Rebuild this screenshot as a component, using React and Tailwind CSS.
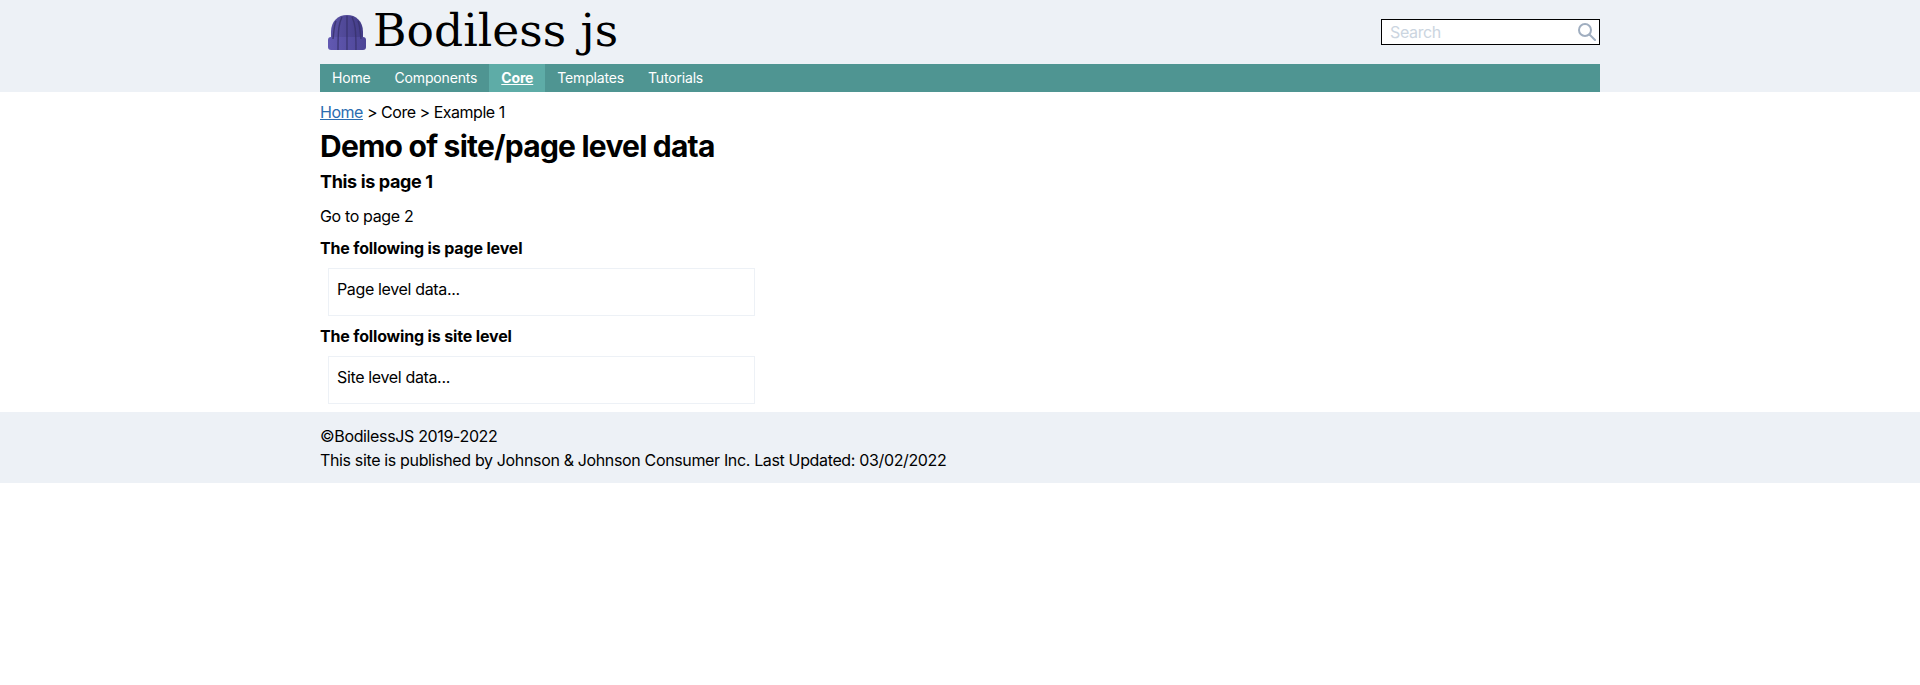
import React from 'react';

function Logo() {
  return (
    <svg viewBox="0 0 38 35" className="w-[38px] h-[35px]" aria-hidden="true">
      <defs>
        <linearGradient id="hatTop" x1="0" x2="1" y1="0" y2="0">
          <stop offset="0" stopColor="#5a52a4" />
          <stop offset="1" stopColor="#433c88" />
        </linearGradient>
        <linearGradient id="hatBrim" x1="0" x2="1" y1="0" y2="0">
          <stop offset="0" stopColor="#6259b2" />
          <stop offset="1" stopColor="#4c4596" />
        </linearGradient>
      </defs>
      <path d="M3 24 V17 C3 6 10 0 19 0 C28 0 35 6 35 17 V24 Z" fill="url(#hatTop)" />
      <path d="M0 25 Q0 22 3 22 L35 22 Q38 22 38 25 V32 Q38 35 35 35 H3 Q0 35 0 32 Z" fill="url(#hatBrim)" />
      <path d="M19 1 V35 M14 2 C11 8 10 14 10 35 M24 2 C27 8 28 14 28 35 M8 6 C6 11 6 16 5 24 M30 6 C32 11 32 16 33 24" fill="none" stroke="#38326f" strokeWidth="1.4" opacity="0.85" />
    </svg>
  );
}

function NavItem({ children, active }) {
  return (
    <a className={active ? 'px-3 h-full flex items-center bg-[#5eaca7] font-bold underline' : 'px-3 h-full flex items-center'}>
      {children}
    </a>
  );
}

function DataBox({ children }) {
  return (
    <div className="ml-2 w-[427px] h-[48px] border border-[#edf1f6] px-2 py-2">
      {children}
    </div>
  );
}

export default function App() {
  return (
    <div className='font-["Inter",sans-serif] text-base tracking-[-0.022em] text-black bg-white min-h-[685px]'>
      <header className="bg-[#edf1f6]">
        <div className="w-[1280px] mx-auto">
          <div className="h-[64px] flex items-center justify-between">
            <div className="flex items-center pl-2 gap-[7px]">
              <Logo />
              <span className='font-["DejaVu_Serif",serif] text-[45.6px] leading-[56px] tracking-normal text-black -mt-[2px]'>Bodiless js</span>
            </div>
            <div className="w-[219px] h-[26px] bg-white border border-black flex items-center justify-between pl-2 pr-[3px]">
              <span className="text-[#cbd5e0]">Search</span>
              <svg viewBox="0 0 18 18" className="w-[18px] h-[18px] -mt-[1px]" fill="none" stroke="#a0aec0" strokeWidth="2" aria-hidden="true">
                <circle cx="7" cy="7" r="6" />
                <path d="M11.5 11.5 L17 17" strokeLinecap="round" />
              </svg>
            </div>
          </div>
          <nav className="h-[28px] bg-[#4f9592] flex text-white text-sm tracking-[-0.012em]">
            <NavItem>Home</NavItem>
            <NavItem>Components</NavItem>
            <NavItem active>Core</NavItem>
            <NavItem>Templates</NavItem>
            <NavItem>Tutorials</NavItem>
          </nav>
        </div>
      </header>

      <main className="w-[1280px] mx-auto pt-2 pb-2">
        <div className="tracking-[-0.03em]"><a className="text-[#2b6cb0] underline">Home</a> &gt; Core &gt; Example 1</div>
        <h1 className="mt-1 text-3xl font-bold tracking-[-0.026em]">Demo of site/page level data</h1>
        <h2 className="mt-1 text-lg leading-7 font-bold tracking-[-0.02em]">This is page 1</h2>
        <p className="mt-2">Go to page 2</p>
        <h3 className="mt-2 font-bold tracking-[-0.01em]">The following is page level</h3>
        <div className="mt-2"><DataBox>Page level data...</DataBox></div>
        <h3 className="mt-2 font-bold tracking-[-0.01em]">The following is site level</h3>
        <div className="mt-2"><DataBox>Site level data...</DataBox></div>
      </main>

      <footer className="bg-[#edf1f6] pt-3 pb-[11px]">
        <div className="w-[1280px] mx-auto">
          <div>©BodilessJS 2019-2022</div>
          <div>This site is published by Johnson &amp; Johnson Consumer Inc. Last Updated: 03/02/2022</div>
        </div>
      </footer>
    </div>
  );
}
